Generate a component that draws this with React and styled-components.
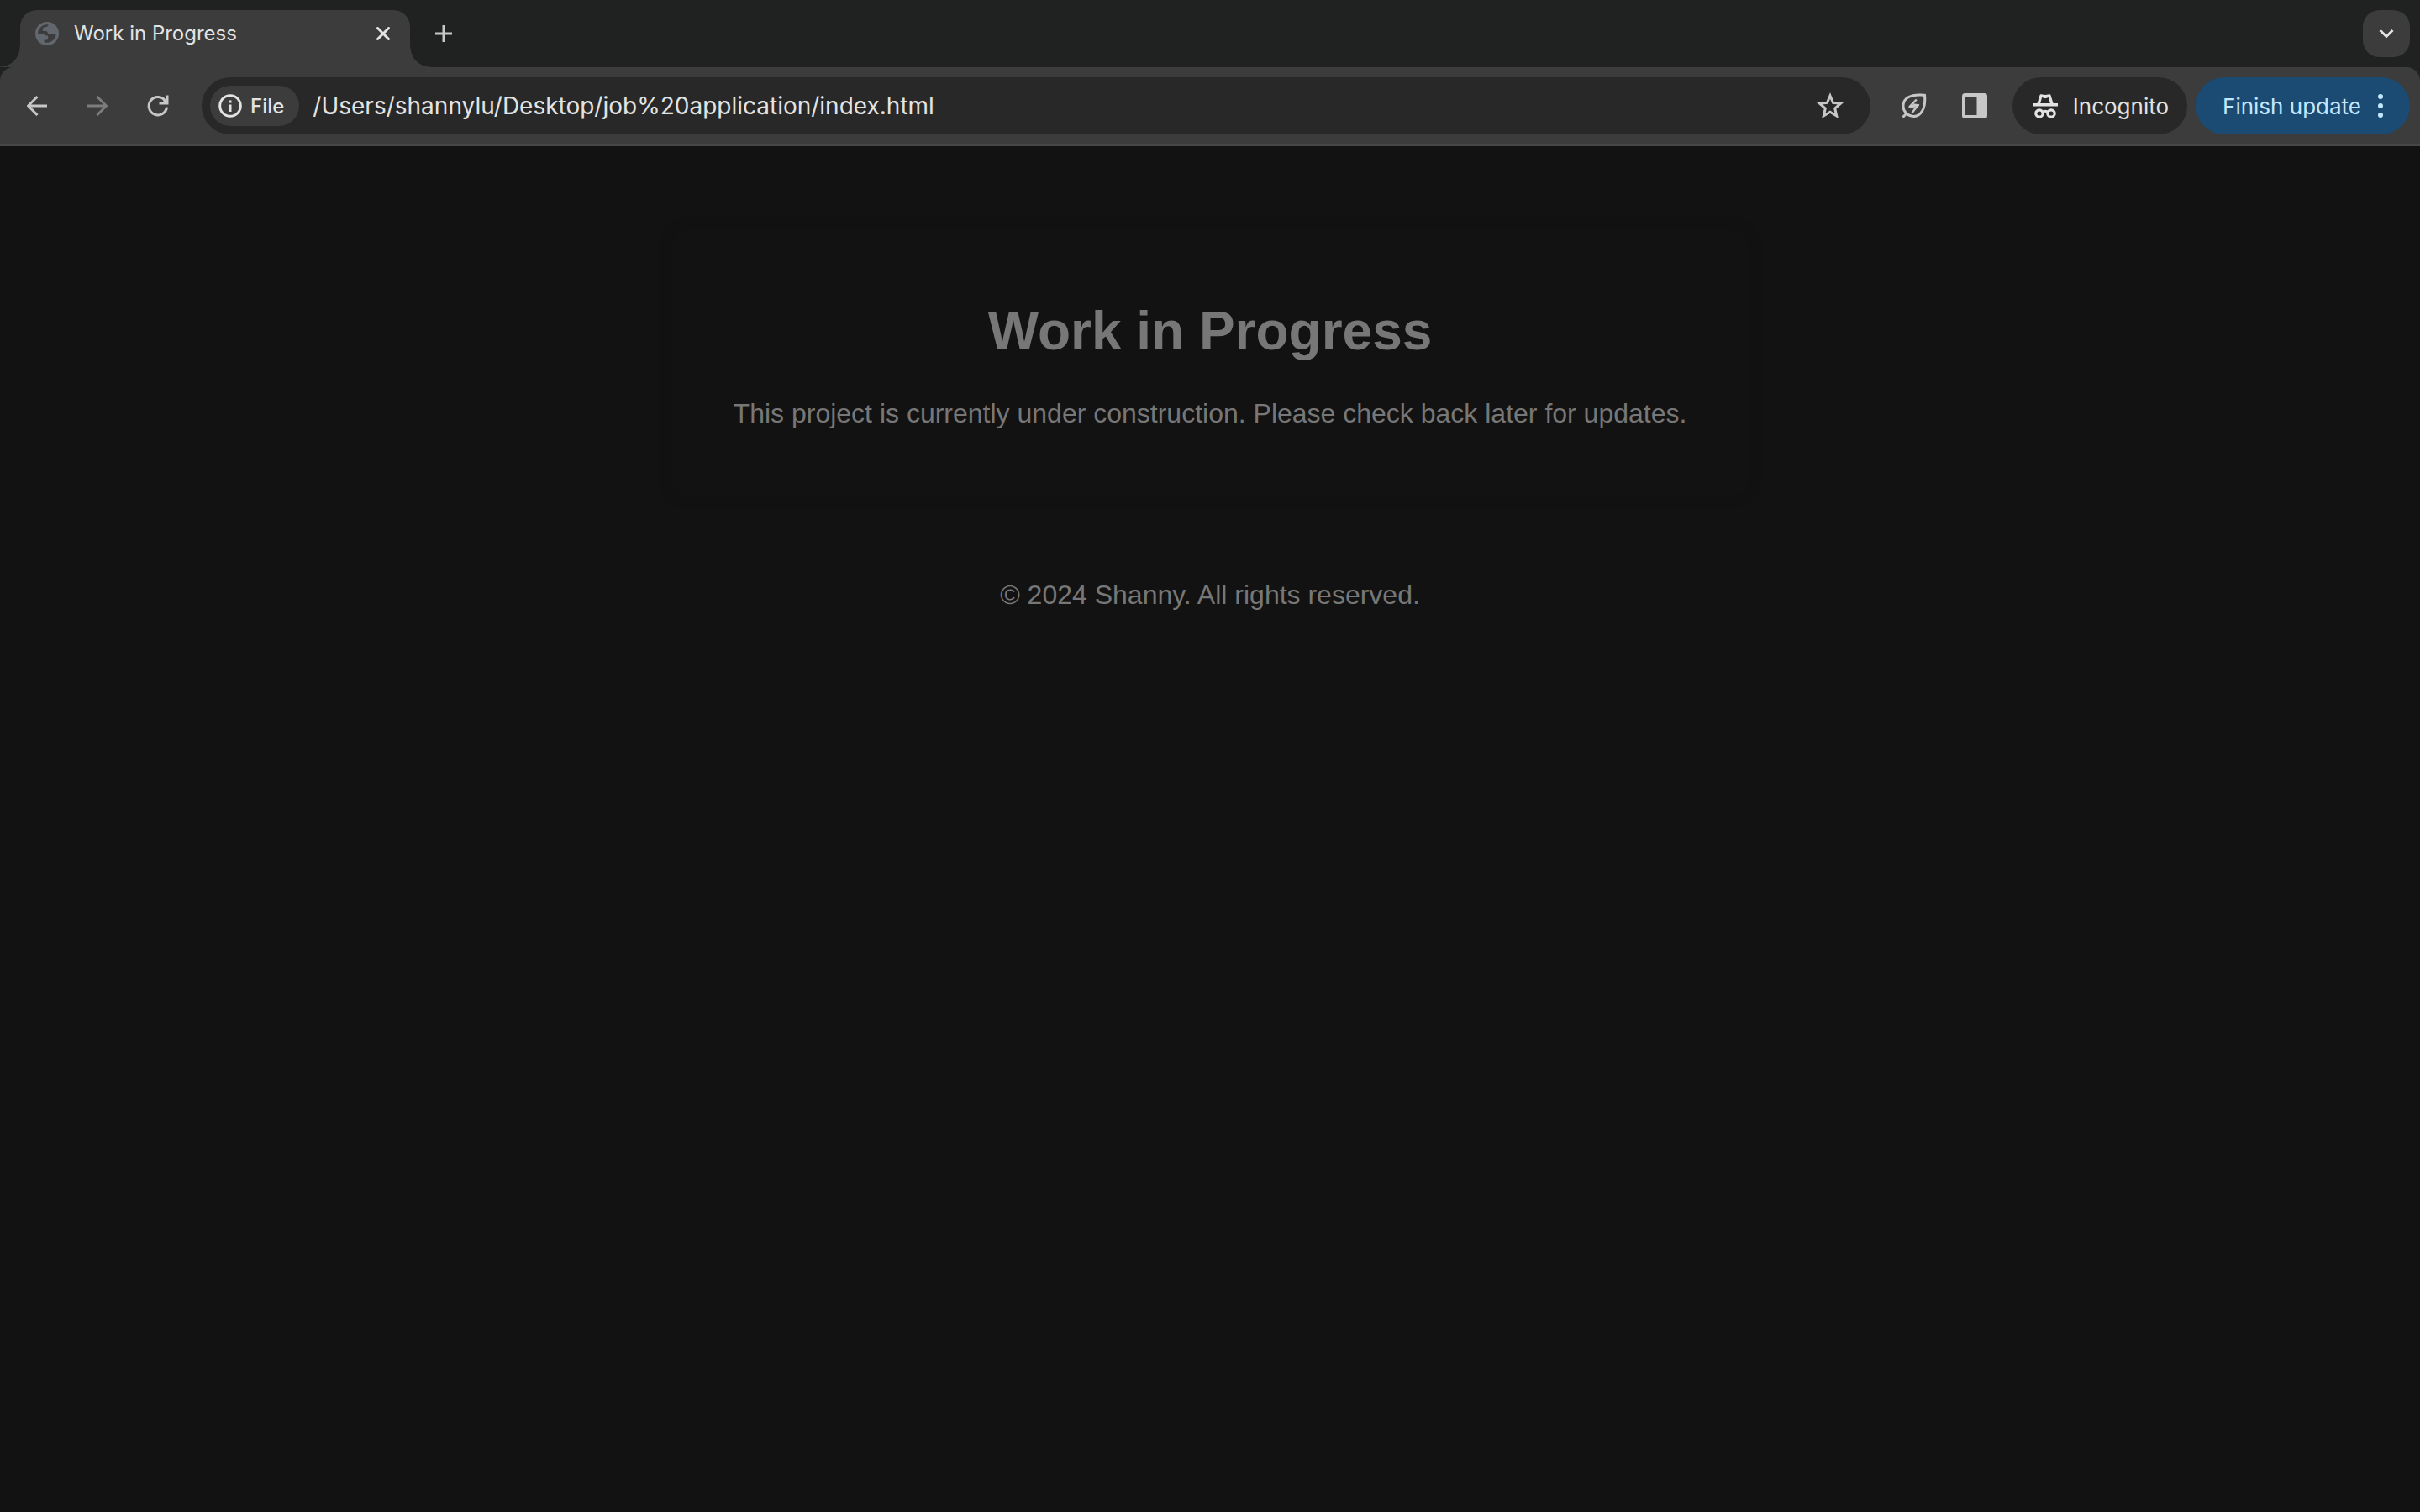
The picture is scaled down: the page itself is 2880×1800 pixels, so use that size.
import React, { useState } from "react";
import styled, { createGlobalStyle } from "styled-components";

const ui = `Inter, Roboto, "Liberation Sans", sans-serif`;

const GlobalStyle = createGlobalStyle`
  *, *::before, *::after { box-sizing: border-box; }
  body {
    margin: 0;
    background: #121212;
    font-family: "Liberation Sans", Arial, sans-serif;
    font-size: 32px;
  }
  button, input { font: inherit; color: inherit; }
`;

const Window = styled.div`
  display: flex;
  flex-direction: column;
  min-height: 100vh;
`;

const Chrome = styled.header`
  background: #202221;
  color: #e3e3e3;
  font-family: ${ui};
`;

const TabStrip = styled.div`
  display: flex;
  align-items: flex-start;
  height: 80px;
  padding: 12px 12px 0 24px;
`;

const Tab = styled.div`
  position: relative;
  display: flex;
  align-items: center;
  width: 464px;
  height: 68px;
  padding: 0 16px 12px 18px;
  border-radius: 20px 20px 0 0;
  background: #3c3c3c;

  &::before,
  &::after {
    content: "";
    position: absolute;
    bottom: 0;
    width: 24px;
    height: 24px;
  }
  &::before {
    right: 100%;
    background: radial-gradient(circle at 0 0, transparent 23px, #3c3c3c 24px);
  }
  &::after {
    left: 100%;
    background: radial-gradient(circle at 100% 0, transparent 23px, #3c3c3c 24px);
  }
`;

const TabTitle = styled.span`
  flex: 1;
  padding-left: 18px;
  font-size: 24px;
  line-height: 32px;
  white-space: nowrap;
`;

const IconButton = styled.button`
  display: flex;
  align-items: center;
  justify-content: center;
  flex: none;
  width: ${(p) => p.$size}px;
  height: ${(p) => p.$size}px;
  padding: 0;
  border: 0;
  border-radius: ${(p) => (p.$filled ? "20px" : "50%")};
  background: ${(p) => (p.$filled ? "#3c3c3c" : "transparent")};
  color: ${(p) => p.$color || "#c7c7c7"};
`;

const NewTabSlot = styled.div`
  flex: 1;
  padding: 0 12px;
`;

const Toolbar = styled.div`
  display: flex;
  align-items: center;
  height: 94px;
  padding: 0 12px 0 8px;
  border-bottom: 2px solid #474747;
  border-radius: 16px 16px 0 0;
  background: #3c3c3c;
`;

const NavButtons = styled.nav`
  display: flex;
  padding-right: 16px;
`;

const Omnibox = styled.div`
  display: flex;
  flex: 1;
  align-items: center;
  min-width: 0;
  height: 68px;
  padding: 0 12px 0 10px;
  border-radius: 34px;
  background: #282828;
`;

const SiteChip = styled.button`
  display: flex;
  align-items: center;
  gap: 10px;
  flex: none;
  height: 48px;
  padding: 0 18px 0 10px;
  border: 0;
  border-radius: 24px;
  background: #3c3c3c;
  font-size: 24px;
  font-weight: 500;
`;

const UrlInput = styled.input`
  flex: 1;
  min-width: 0;
  margin-left: 16px;
  padding: 0;
  border: 0;
  outline: 0;
  background: transparent;
  font-size: 28px;
  line-height: 36px;
`;

const Actions = styled.div`
  display: flex;
  padding: 0 9px 0 16px;
`;

const Pill = styled.button`
  display: flex;
  align-items: center;
  gap: ${(p) => p.$gap}px;
  flex: none;
  height: 68px;
  padding: ${(p) => p.$pad};
  border: 0;
  border-radius: 34px;
  background: ${(p) => p.$bg};
  color: ${(p) => p.$color};
  font-size: 26px;
  white-space: nowrap;

  & + & { margin-left: 10px; }
`;

const Page = styled.main`
  display: flex;
  flex: 1;
  flex-direction: column;
  align-items: center;
  padding: 100px 20px;
  color: #777777;
  text-align: center;
`;

const Card = styled.section`
  width: 100%;
  max-width: 1280px;
  padding: 82px 40px 78px;
  border-radius: 16px;
  background: #121212;
  box-shadow: 0 0 20px rgba(0, 0, 0, 0.1);
`;

const Heading = styled.h1`
  margin: 0;
  font-size: 64px;
  line-height: 76px;
`;

const Text = styled.p`
  margin: ${(p) => p.$top}px 0 0;
  line-height: 40px;
`;

const icon = (size, viewBox, extra) => ({
  width: size,
  height: size,
  viewBox,
  fill: "currentColor",
  "aria-hidden": true,
  ...extra,
});
const stroke = (w) => ({
  fill: "none",
  stroke: "currentColor",
  strokeWidth: w,
});

const Globe = () => (
  <svg {...icon(28, "0 0 28 28")} color="#62666d">
    <circle cx="14" cy="14" r="14" />
    <path fill="#3c3c3c" d="M16 3.200C14.600 4 14.300 5 14.300 6H12c-2 0-3 1.200-3 2.800V11h3.500c1.500 0 2.300 1 2.300 2.300 0 1 .8 1.700 2 1.700h3.500c2.200 0 2.500-1.400 4.400-.9C24.600 20 19.900 24.800 14 24.800c-1.300 0-2.400-.2-3.400-.6v-2.700h2.600c1.200 0 2-.8 2-2v-1.300c0-1.100-.8-1.900-1.900-1.900h-2.400c0-1.500-1-2.300-2.300-2.300H3.200C3.200 8 8 3.200 14 3.200z" />
  </svg>
);
const Close = () => (
  <svg {...icon(16, "0 0 16 16", stroke(3))}>
    <path strokeLinecap="round" d="M1.500 1.500l13 13M14.500 1.500l-13 13" />
  </svg>
);
const Plus = () => (
  <svg {...icon(20, "0 0 20 20", stroke(3))}>
    <path d="M10 0v20M0 10h20" />
  </svg>
);
const Chevron = () => (
  <svg {...icon(20, "0 0 20 20", stroke(3))}>
    <path d="M2.500 6l7.500 7.500L17.500 6" />
  </svg>
);
const Arrow = ({ right }) => (
  <svg {...icon(24, "0 0 24 24", stroke(3))}>
    <path d={right ? "M0 12h22M11.500 1L22.500 12 11.500 23" : "M24 12H2M12.500 1L1.500 12l11 11"} />
  </svg>
);
const Reload = () => (
  <svg {...icon(28, "0 0 28 28", stroke(3))}>
    <path d="M24.500 15.500A10.700 10.700 0 1 1 22.200 7.500" />
    <path d="M25 1.500V11H15.500" />
    <path fill="currentColor" stroke="none" d="M25 4v8h-8z" />
  </svg>
);
const Info = () => (
  <svg {...icon(28, "0 0 28 28")}>
    <circle cx="14" cy="14" r="12.300" {...stroke(3)} />
    <path d="M12.500 12.500h3v8.500h-3zM12.500 7.500h3v3h-3z" />
  </svg>
);
const Star = () => (
  <svg {...icon(34, "0 0 34 34", stroke(3))}>
    <path strokeMiterlimit="10" d="M17 5l3.500 8.400 9 .8-6.800 5.900 2 8.900L17 24.300 9.300 29l2-8.900-6.800-5.900 9-.8z" />
  </svg>
);
const Leaf = () => (
  <svg {...icon(30, "0 0 30 30", stroke(3))}>
    <path d="M27.500 2.300C21 1.500 13 2 8 4.800 1 8.800.5 17.500 4.500 22.500c4.500 5.700 13 6.500 17.500 2C27 19.500 28.500 12 27.500 2.300z" />
    <path d="M1.500 28.500L6 24" />
    <path strokeWidth="2.400" strokeLinejoin="round" d="M17.800 7.500L9.500 16l10-1.700-7 9" />
    <path strokeWidth="2" d="M9 16.300l7 1.200M13.500 13.300l7.500 1" />
  </svg>
);
const Panel = () => (
  <svg {...icon(30, "0 0 30 30")}>
    <path fillRule="evenodd" d="M3.500 0h23A3.500 3.500 0 0 1 30 3.500v23a3.500 3.500 0 0 1-3.500 3.500h-23A3.500 3.500 0 0 1 0 26.500v-23A3.500 3.500 0 0 1 3.500 0zM3.500 4v22h14V4z" />
  </svg>
);
const Spy = () => (
  <svg {...icon(30, "0 0 30 30")}>
    <path fillRule="evenodd" d="M10 1.200L15 2l5-.8c.8-.1 1.300.3 1.500 1L24.500 12H30v3.500H0V12h5.500L8.500 2.200c.2-.7.700-1.100 1.500-1zM9.200 12h11.600L18.900 5 15 6.300 11.100 5z" />
    <circle cx="8" cy="24" r="4.200" {...stroke(3.200)} />
    <circle cx="22" cy="24" r="4.200" {...stroke(3.200)} />
    <path d="M11.500 23c2-2.200 5-2.200 7 0" {...stroke(3)} />
  </svg>
);
const Dots = () => (
  <svg width="6" height="28" viewBox="0 0 6 28" fill="currentColor" aria-hidden>
    <circle cx="3" cy="3" r="3" />
    <circle cx="3" cy="14" r="3" />
    <circle cx="3" cy="25" r="3" />
  </svg>
);

export default function App() {
  const [url, setUrl] = useState("/Users/shannylu/Desktop/job%20application/index.html");
  return (
    <Window>
      <GlobalStyle />
      <Chrome>
        <TabStrip>
          <Tab>
            <Globe />
            <TabTitle>Work in Progress</TabTitle>
            <IconButton $size={32} $color="#e3e3e3" aria-label="Close tab"><Close /></IconButton>
          </Tab>
          <NewTabSlot>
            <IconButton $size={56} aria-label="New tab"><Plus /></IconButton>
          </NewTabSlot>
          <IconButton $size={56} $filled $color="#e3e3e3" aria-label="Search tabs"><Chevron /></IconButton>
        </TabStrip>
        <Toolbar>
          <NavButtons aria-label="History">
            <IconButton $size={72} aria-label="Back"><Arrow /></IconButton>
            <IconButton $size={72} $color="#7c7c7c" aria-label="Forward"><Arrow right /></IconButton>
            <IconButton $size={72} aria-label="Reload"><Reload /></IconButton>
          </NavButtons>
          <Omnibox>
            <SiteChip><Info />File</SiteChip>
            <UrlInput aria-label="Address" value={url} onChange={(e) => setUrl(e.target.value)} />
            <IconButton $size={72} aria-label="Bookmark this tab"><Star /></IconButton>
          </Omnibox>
          <Actions>
            <IconButton $size={72} aria-label="Energy saver"><Leaf /></IconButton>
            <IconButton $size={72} aria-label="Side panel"><Panel /></IconButton>
          </Actions>
          <Pill $bg="#282828" $color="#e3e3e3" $gap={18} $pad="0 22px 0 24px"><Spy />Incognito</Pill>
          <Pill $bg="#1b4b72" $color="#c2e7ff" $gap={20} $pad="0 32px"><span>Finish update</span><Dots /></Pill>
        </Toolbar>
      </Chrome>
      <Page>
        <Card>
          <Heading>Work in Progress</Heading>
          <Text $top={40}>This project is currently under construction. Please check back later for updates.</Text>
        </Card>
        <Text $top={98} as="footer">© 2024 Shanny. All rights reserved.</Text>
      </Page>
    </Window>
  );
}
